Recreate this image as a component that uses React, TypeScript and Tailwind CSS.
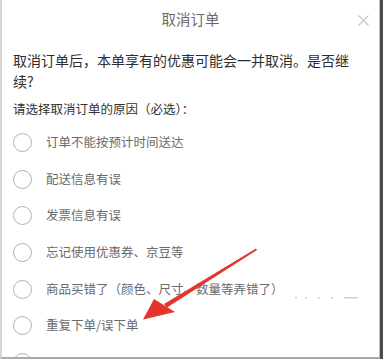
import React from "react";

const reasons = [
  "订单不能按预计时间送达",
  "配送信息有误",
  "发票信息有误",
  "忘记使用优惠券、京豆等",
  "商品买错了（颜色、尺寸、数量等弄错了）",
  "重复下单/误下单",
  "",
];

export default function App() {
  return (
    <div
      className="relative w-[383px] h-[359px] bg-[#4a4a4a] overflow-hidden"
      style={{ fontFamily: '"Noto Sans CJK SC", "Noto Sans", sans-serif' }}
    >
      <div className="w-[380px] h-[359px] bg-white border-l-2 border-l-[#d6d6d6] border-r border-r-[#bdbdbd] border-b-2 border-b-[#aaaaaa] overflow-hidden flex flex-col">
        <div className="relative h-[38px] shrink-0 flex items-center justify-center text-[14.5px] text-[#6b6b6b]">
          取消订单
          <svg
            className="absolute right-[10px] top-[15px]"
            width="11"
            height="11"
            viewBox="0 0 11 11"
          >
            <path d="M0.5 0.5L10.5 10.5M10.5 0.5L0.5 10.5" stroke="#c4c4c4" strokeWidth="1.1" />
          </svg>
        </div>
        <div className="pl-[11px] mt-[12px] w-[352px] text-[14px] leading-[21px] text-[#2e2e2e]">
          取消订单后，本单享有的优惠可能会一并取消。是否继续?
        </div>
        <div className="pl-[11px] mt-[7px] text-[12.5px] leading-[20px] text-[#333333]">
          请选择取消订单的原因（必选）：
        </div>
        <div className="mt-[5px] flex flex-col">
          {reasons.map((r, i) => (
            <div key={i} className="h-[36.7px] shrink-0 flex items-center pl-[11px]">
              <div className="w-[19px] h-[19px] rounded-full border-[1.5px] border-[#b3b3b3] shrink-0" />
              {r && <span className="ml-[14px] text-[12.5px] text-[#6a6a6a]">{r}</span>}
            </div>
          ))}
        </div>
      </div>
      <svg className="absolute left-0 top-0 pointer-events-none" width="383" height="359" viewBox="0 0 383 359">
        <g fill="#cfcfcf">
          <rect x="295" y="297" width="2" height="1.5" />
          <rect x="305" y="297" width="2" height="1.5" />
          <rect x="318" y="297" width="2" height="1.5" />
          <rect x="331" y="297" width="2" height="1.5" />
          <rect x="344" y="297" width="14" height="1.5" />
        </g>
        <polygon
          points="256,248.5 257,250 167,307.5 164,304"
          fill="#e5332e"
        />
        <polygon points="143,319.5 154,299 175,312" fill="#e5332e" />
      </svg>
    </div>
  );
}
